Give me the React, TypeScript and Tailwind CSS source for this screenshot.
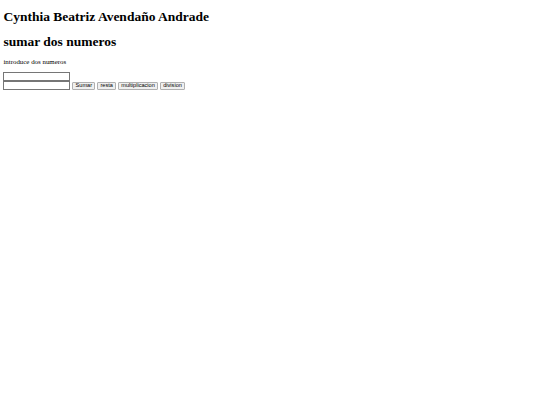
import React, { useState } from 'react';

const App: React.FC = () => {
    const [a, setA] = useState('');
    const [b, setB] = useState('');

    const buttons = ['Sumar', 'resta', 'multiplicacion', 'division'];

    return (
        <div className="min-h-[405px] bg-white px-[3.4px] text-black font-['Liberation_Serif',serif]">
            <h1 className="pt-[9px] mb-[9px] text-[13.5px] font-bold leading-[1.15]">
                Cynthia Beatriz Avendaño Andrade
            </h1>
            <h1 className="mb-[9px] mt-[9px] text-[13.5px] font-bold leading-[1.15]">
                sumar dos numeros
            </h1>
            <p className="text-[6.9px] leading-[1.15]">introduce dos numeros</p>

            {/* Entradas */}
            <div className="mt-[6.5px] flex flex-col items-start">
                <input
                    value={a}
                    onChange={(e) => setA(e.target.value)}
                    className="h-[9px] w-[67px] border border-[#767676] bg-white px-[1px] text-[5.6px] outline-none"
                />
                <div className="flex items-end gap-[2px]">
                    <input
                        value={b}
                        onChange={(e) => setB(e.target.value)}
                        className="h-[9px] w-[67px] border border-[#767676] bg-white px-[1px] text-[5.6px] outline-none"
                    />
                    {buttons.map((t) => (
                        <button
                            key={t}
                            className="flex h-[8.5px] items-center rounded-[1px] border border-[#b0b0b0] bg-[#efefef] px-[2.2px] text-[5.6px] leading-none font-['Liberation_Sans',sans-serif]"
                        >
                            {t}
                        </button>
                    ))}
                </div>
            </div>
        </div>
    );
};

export default App;
